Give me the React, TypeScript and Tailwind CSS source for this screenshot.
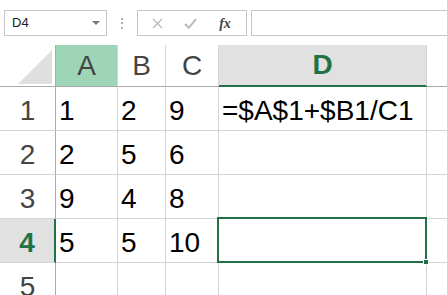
const cols = [
  { name: "A", w: "w-[62px]" },
  { name: "B", w: "w-[48px]" },
  { name: "C", w: "w-[53px]" },
  { name: "D", w: "w-[208px]" },
];

const rows = [
  ["1", "2", "9", "=$A$1+$B1/C1"],
  ["2", "5", "6", ""],
  ["9", "4", "8", ""],
  ["5", "5", "10", ""],
  ["", "", "", ""],
];

function Toolbar() {
  return (
    <div className="h-[45px] flex items-start pt-[10px] pl-[4px] gap-0">
      <div className="w-[103px] h-[26px] border border-[#c6c6c6] flex items-center justify-between pl-[7px] pr-[6px]">
        <span className="text-[13px] text-[#222]">D4</span>
        <svg width="8" height="5" viewBox="0 0 8 5">
          <polygon points="0,0 8,0 4,4" fill="#7a7a7a" />
        </svg>
      </div>
      <div className="w-[30px] h-[26px] flex flex-col items-center justify-center gap-[2.5px]">
        <div className="w-[2px] h-[2px] bg-[#b0b0b0]" />
        <div className="w-[2px] h-[2px] bg-[#b0b0b0]" />
        <div className="w-[2px] h-[2px] bg-[#b0b0b0]" />
      </div>
      <div className="w-[110px] h-[26px] border border-[#c6c6c6] flex items-center">
        <div className="w-[38px] flex justify-center">
          <svg width="11" height="11" viewBox="0 0 11 11">
            <path d="M1 1 L10 10 M10 1 L1 10" stroke="#b8b8b8" strokeWidth="1.3" />
          </svg>
        </div>
        <div className="w-[28px] flex justify-center">
          <svg width="13" height="11" viewBox="0 0 13 11">
            <path d="M1 6 L4.8 9.8 L12 1.2" stroke="#b8b8b8" strokeWidth="1.9" fill="none" />
          </svg>
        </div>
        <div className="w-[42px] flex justify-center">
          <span className="text-[14px] italic font-semibold text-[#444] font-['Liberation_Serif',serif]">fx</span>
        </div>
      </div>
      <div className="ml-[4px] flex-1 h-[26px] border border-[#c6c6c6] border-r-0" />
    </div>
  );
}

export default function App() {
  return (
    <div className="w-[447px] h-[295px] overflow-hidden bg-white font-['Liberation_Sans',Arial,sans-serif] relative">
      <Toolbar />
      <div className="flex">
        <div className="w-[56px] h-[42px] border-r border-b border-[#ababab] flex items-end justify-end pr-[3px] pb-[2px]">
          <svg width="34" height="34" viewBox="0 0 34 34">
            <polygon points="34,0 34,34 0,34" fill="#dfdfdf" />
          </svg>
        </div>
        {cols.map((c) => (
          <div
            key={c.name}
            className={
              c.name === "A"
                ? `${c.w} h-[42px] bg-[#9fd5b7] border-r border-r-[#d4d4d4] border-b border-b-[#ababab] flex items-center justify-center text-[28px] text-[#444]`
                : c.name === "D"
                  ? `${c.w} h-[42px] bg-[#e1e1e1] border-r border-r-[#d4d4d4] border-b-2 border-b-[#217346] flex items-center justify-center text-[28px] font-bold text-[#217346]`
                  : `${c.w} h-[42px] border-r border-r-[#d4d4d4] border-b border-b-[#ababab] flex items-center justify-center text-[28px] text-[#444]`
            }
          >
            {c.name}
          </div>
        ))}
        <div className="flex-1 h-[42px] border-b border-[#ababab]" />
      </div>
      {rows.map((r, i) => (
        <div key={i} className="flex">
          <div
            className={
              i === 3
                ? "w-[56px] h-[44px] bg-[#e1e1e1] border-r-2 border-r-[#217346] border-b border-b-[#d4d4d4] flex items-center justify-center pt-[4px] text-[28px] font-bold text-[#217346]"
                : "w-[56px] h-[44px] border-r border-r-[#ababab] border-b border-b-[#d4d4d4] flex items-center justify-center pt-[4px] text-[28px] text-[#444]"
            }
          >
            {i + 1}
          </div>
          {r.map((v, j) => (
            <div
              key={j}
              className={`${cols[j].w} h-[44px] border-r border-b border-[#d4d4d4] flex items-center pl-[3px] pt-[4px] text-[28px] text-black whitespace-nowrap`}
            >
              {v}
            </div>
          ))}
          <div className="flex-1 h-[44px] border-b border-[#d4d4d4]" />
        </div>
      ))}
      <div className="absolute left-[217px] top-[217px] w-[210px] h-[46px] border-2 border-[#217346]" />
      <div className="absolute left-[423px] top-[259px] w-[6px] h-[6px] bg-[#217346] border border-white" />
    </div>
  );
}
